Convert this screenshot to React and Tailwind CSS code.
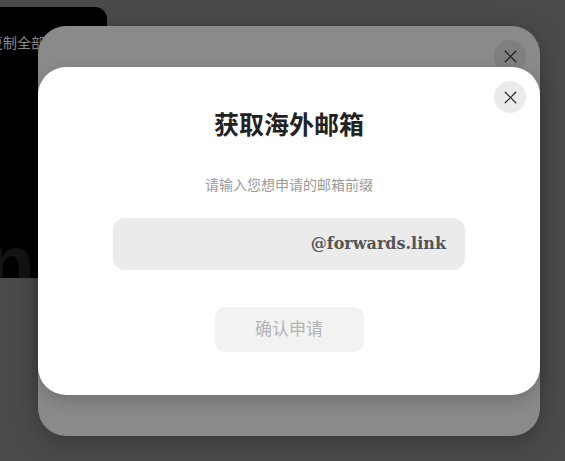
import { X } from 'lucide-react'

const cjk = "font-['Inter','Noto_Sans_CJK_SC',sans-serif]"

function CloseButton({ dim }) {
  return (
    <button
      className={`absolute right-[14px] top-[14px] flex h-8 w-8 items-center justify-center rounded-full ${
        dim ? 'bg-[#7f7f7f] text-[#1c1c1c]' : 'bg-[#ebebeb] text-[#2a2a2a]'
      }`}
    >
      <X size={21} strokeWidth={1.4} />
    </button>
  )
}

export default function App() {
  return (
    <div className={`relative h-[461px] w-full overflow-hidden bg-[#4a4a4a] ${cjk}`}>
      {/* page behind */}
      <div className="absolute left-[-100px] top-[7px] h-[271px] w-[207px] overflow-hidden rounded-tr-[12px] bg-black">
        <p className="pl-[89px] pt-[25px] text-[14px] text-[#8c8c8c]">复制全部</p>
        <p className="absolute bottom-[-26px] left-[86px] text-[80px] leading-none font-semibold text-[#141414] font-['Liberation_Sans',sans-serif]">nn</p>
      </div>

      {/* previous modal, dimmed */}
      <div className="absolute left-[38px] top-[26px] h-[410px] w-[502px] rounded-[28px] bg-[#8a8a8a] shadow-[0_6px_24px_rgba(0,0,0,0.25)]">
        <CloseButton dim />
      </div>

      {/* active modal */}
      <div className="absolute left-[38px] top-[67px] flex h-[328px] w-[502px] flex-col items-center rounded-[28px] bg-white shadow-[0_6px_18px_rgba(0,0,0,0.18)]">
        <CloseButton />
        <h2 className="mt-[41px] text-[25px] leading-[34px] font-bold text-[#222]">获取海外邮箱</h2>
        <p className="mt-[33px] text-[14px] leading-[20px] text-[#9a9a9a]">请输入您想申请的邮箱前缀</p>
        <div className="mt-[23px] flex h-[52px] w-[352px] items-center justify-end rounded-[12px] bg-[#ebebeb] px-[19px]">
          <span className="text-[16px] font-bold text-[#555] font-['DejaVu_Serif',serif]">@forwards.link</span>
        </div>
        <button className="mt-[37px] flex h-[45px] w-[149px] items-center justify-center rounded-[10px] bg-[#f2f2f2] text-[17px] text-[#b4b4b4]">
          确认申请
        </button>
      </div>
    </div>
  )
}
